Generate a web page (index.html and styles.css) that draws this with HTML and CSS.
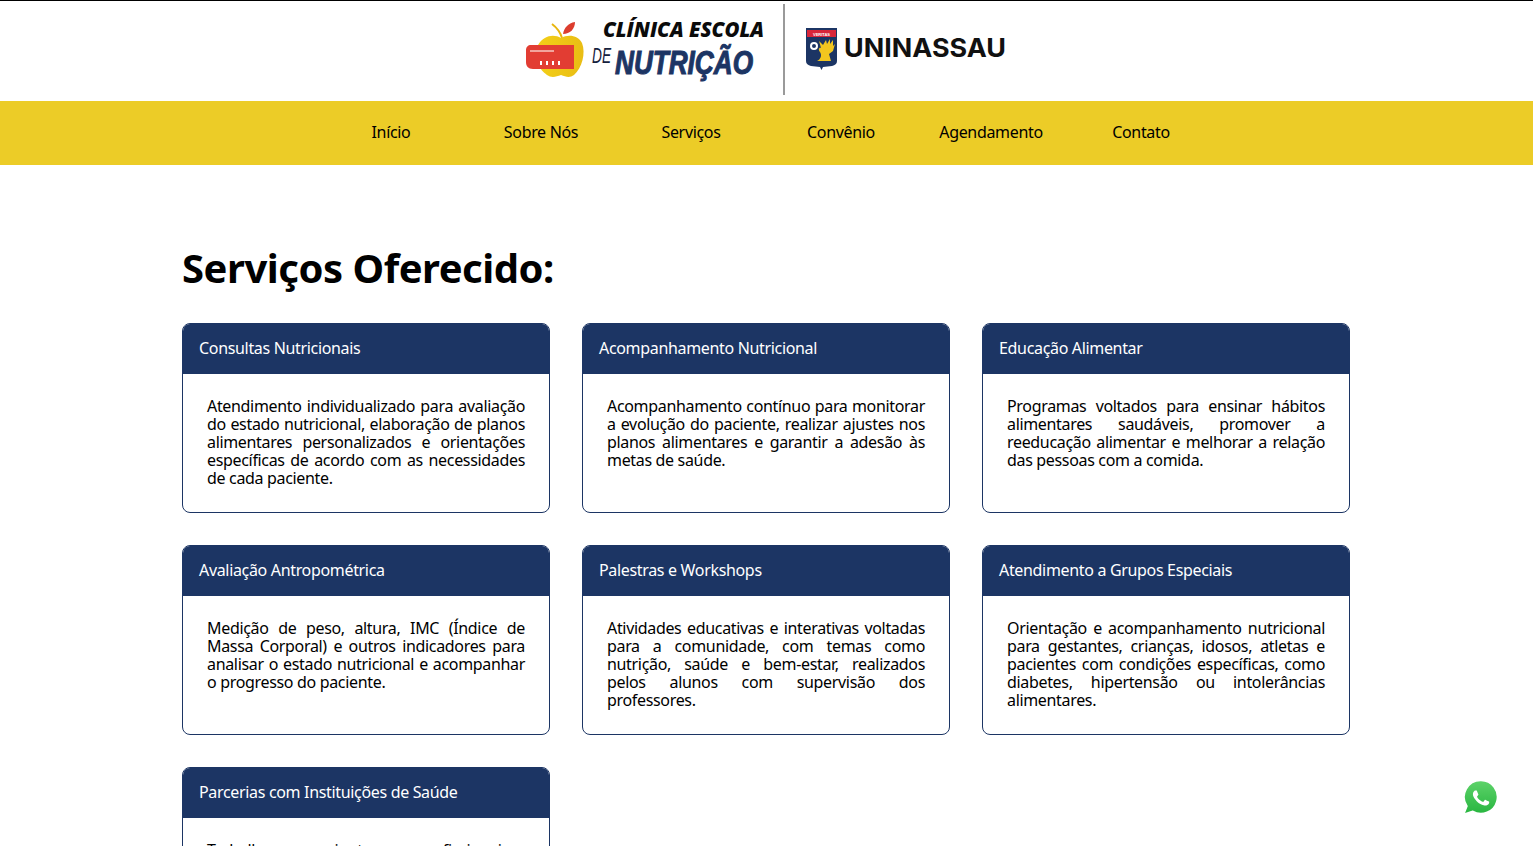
FILE: index.html
```html
<!DOCTYPE html>
<html lang="pt-BR">
<head>
  <meta charset="UTF-8">
  <title>Clínica Escola de Nutrição</title>
  <link rel="stylesheet" href="styles.css">
</head>
<body>
  <header class="topo">
    <svg class="logos" width="500" height="100" viewBox="0 0 500 100" role="img" aria-label="Clínica Escola de Nutrição e Uninassau">
      <defs>
        <linearGradient id="brilho" x1="0" y1="0" x2="1" y2="0">
          <stop offset="0" stop-color="#f3cf18"/>
          <stop offset="1" stop-color="#e9bd14"/>
        </linearGradient>
      </defs>
      <!-- maca -->
      <path d="M38 23 C42 26 46 30 48 37" fill="none" stroke="#e8b60f" stroke-width="2"/>
      <path d="M49 33 C50 27 54 22 61 21 C61 28 56 33 49 33Z" fill="#dc3d2e"/>
      <path d="M47 37 C54 33 64 34 68 42 C72 52 68 67 60 74 C56 77 52 76 47 74 C42 76 37 77 33 74 C29 71 26 68 24 62 L24 44 C30 34 40 33 47 37Z" fill="url(#brilho)"/>
      <path d="M17 44 L60 44 L60 68 L19 68 C14 68 12 65 12 61 L12 49 C12 46 14 44 17 44Z" fill="#e23d33"/>
      <path d="M16 49 L40 49 L40 51 L16 51Z" fill="#f2a49c"/>
      <g fill="#fff">
        <rect x="26" y="60" width="2" height="4"/>
        <rect x="32" y="60" width="2" height="4"/>
        <rect x="38" y="60" width="2" height="4"/>
        <rect x="44" y="60" width="2" height="4"/>
      </g>
      <!-- textos da clinica -->
      <text class="logo-clinica" x="89" y="36" textLength="161" lengthAdjust="spacingAndGlyphs">CLÍNICA ESCOLA</text>
      <text class="logo-de" x="78" y="62" textLength="19" lengthAdjust="spacingAndGlyphs">DE</text>
      <text class="logo-nutricao" x="101" y="73" textLength="138" lengthAdjust="spacingAndGlyphs">NUTRIÇÃO</text>
      <rect x="269" y="3" width="2" height="91" fill="#9a9a9a"/>
      <!-- brasao -->
      <path d="M292 27 L323 27 L323 60 C323 63 321 64 318 65 L309 66 L307.500 69 L306 66 L297 65 C294 64 292 63 292 60Z" fill="#1c3564"/>
      <rect x="293" y="29" width="29" height="7" fill="#d9263a"/>
      <text class="logo-veritas" x="307.500" y="34.500" text-anchor="middle">VERITAS</text>
      <path d="M305 40 L309 44 L312 39 L313 43 L316 38 L316 43 L319 39 L319 45 L321 43 L319 50 L315 53 L317 60 L303 60 C307 58 308 54 306 51 C304 49 305 46 307 47Z" fill="#f2c61f"/>
      <circle cx="300" cy="45" r="3" fill="none" stroke="#fff" stroke-width="2"/>
      <text class="logo-uninassau" x="330" y="56" textLength="162" lengthAdjust="spacingAndGlyphs">UNINASSAU</text>
    </svg>
  </header>

  <nav class="menu">
    <a href="#">Início</a>
    <a href="#">Sobre Nós</a>
    <a href="#">Serviços</a>
    <a href="#">Convênio</a>
    <a href="#">Agendamento</a>
    <a href="#">Contato</a>
  </nav>

  <main class="servicos">
    <h1>Serviços Oferecido:</h1>
    <div class="grade">
      <section class="card">
        <h2>Consultas Nutricionais</h2>
        <p>Atendimento individualizado para avaliação do estado nutricional, elaboração de planos alimentares personalizados e orientações específicas de acordo com as necessidades de cada paciente.</p>
      </section>
      <section class="card">
        <h2>Acompanhamento Nutricional</h2>
        <p>Acompanhamento contínuo para monitorar a evolução do paciente, realizar ajustes nos planos alimentares e garantir a adesão às metas de saúde.</p>
      </section>
      <section class="card">
        <h2>Educação Alimentar</h2>
        <p>Programas voltados para ensinar hábitos alimentares saudáveis, promover a reeducação alimentar e melhorar a relação das pessoas com a comida.</p>
      </section>
      <section class="card">
        <h2>Avaliação Antropométrica</h2>
        <p>Medição de peso, altura, IMC (Índice de Massa Corporal) e outros indicadores para analisar o estado nutricional e acompanhar o progresso do paciente.</p>
      </section>
      <section class="card">
        <h2>Palestras e Workshops</h2>
        <p>Atividades educativas e interativas voltadas para a comunidade, com temas como nutrição, saúde e bem-estar, realizados pelos alunos com supervisão dos professores.</p>
      </section>
      <section class="card">
        <h2>Atendimento a Grupos Especiais</h2>
        <p>Orientação e acompanhamento nutricional para gestantes, crianças, idosos, atletas e pacientes com condições específicas, como diabetes, hipertensão ou intolerâncias alimentares.</p>
      </section>
      <section class="card">
        <h2>Parcerias com Instituições de Saúde</h2>
        <p>Trabalho em conjunto com profissionais e instituições de saúde para oferecer um atendimento mais completo e integrado aos pacientes.</p>
      </section>
    </div>
  </main>

  <a class="whatsapp" href="#" aria-label="WhatsApp">
    <svg width="40" height="40" viewBox="0 0 40 40">
      <defs>
        <linearGradient id="verde" x1="0" y1="0" x2="0" y2="1">
          <stop offset="0" stop-color="#5ed36a"/>
          <stop offset="1" stop-color="#27b53f"/>
        </linearGradient>
      </defs>
      <path d="M20 2.500 A16.500 16.500 0 1 1 11.500 33.200 L2.800 36.200 L6 28.200 A16.500 16.500 0 0 1 20 2.500Z" fill="url(#verde)" stroke="#fff" stroke-width="1.500"/>
      <path transform="translate(3.800 3.800) scale(1.350)" fill="#fff" d="M17.472 14.382c-.297-.149-1.758-.867-2.03-.967-.273-.099-.471-.148-.67.15-.197.297-.767.966-.94 1.164-.173.199-.347.223-.644.075-.297-.15-1.255-.463-2.39-1.475-.883-.788-1.48-1.761-1.653-2.059-.173-.297-.018-.458.13-.606.134-.133.298-.347.446-.52.149-.174.198-.298.298-.497.099-.198.05-.371-.025-.52-.075-.149-.669-1.612-.916-2.207-.242-.579-.487-.5-.669-.51-.173-.008-.371-.01-.57-.01-.198 0-.52.074-.792.372-.272.297-1.04 1.016-1.04 2.479 0 1.462 1.065 2.875 1.213 3.074.149.198 2.096 3.2 5.077 4.487.709.306 1.262.489 1.694.625.712.227 1.36.195 1.871.118.571-.085 1.758-.719 2.006-1.413.248-.694.248-1.289.173-1.413-.074-.124-.272-.198-.57-.347z"/>
    </svg>
  </a>
</body>
</html>
```

FILE: styles.css
```css
* {
  box-sizing: border-box;
}

html, body {
  height: 846px;
  overflow: hidden;
}

body {
  margin: 0;
  font-family: 'Noto Sans', sans-serif;
  color: #000;
  background: #fff;
}

.topo {
  height: 101px;
  border-top: 1px solid #000;
  display: flex;
  justify-content: center;
}

.logos {
  display: block;
  margin-right: 5px;
}

.logo-clinica {
  font: italic 800 21px 'Open Sans', sans-serif;
  fill: #0b0b0b;
}

.logo-de {
  font: italic 400 22px 'Liberation Sans', sans-serif;
  fill: #14213d;
}

.logo-nutricao {
  font: italic 700 33px 'Liberation Sans', sans-serif;
  fill: #1c3564;
  stroke: #1c3564;
  stroke-width: 1.1px;
}

.logo-veritas {
  font: 700 4px 'Liberation Sans', sans-serif;
  fill: #fff;
}

.logo-uninassau {
  font: 700 26px 'Inter', sans-serif;
  fill: #111;
}

.menu {
  height: 64px;
  padding: 0 1px 2px 0;
  background: #eccc27;
  display: flex;
  justify-content: center;
  align-items: center;
}

.menu a {
  width: 150px;
  text-align: center;
  font-size: 16px;
  letter-spacing: -0.33px;
  color: #000;
  text-decoration: none;
}

.servicos {
  width: 1168px;
  margin: 0 auto;
  padding-top: 76px;
  position: relative;
  left: -0.5px;
}

h1 {
  margin: 0 0 29px;
  font-size: 40px;
  line-height: 53px;
  font-weight: 700;
  letter-spacing: -0.47px;
}

.grade {
  display: grid;
  grid-template-columns: repeat(3, 368px);
  grid-auto-rows: 190px;
  gap: 32px;
}

.card {
  border: 1px solid #1c3564;
  border-radius: 8px;
  overflow: hidden;
}

.card h2 {
  margin: 0;
  height: 50px;
  padding: 0 16px;
  background: #1c3564;
  color: #fff;
  font-size: 16px;
  font-weight: 400;
  line-height: 49px;
  letter-spacing: -0.33px;
}

.card p {
  margin: 0;
  padding: 23px 24px 0;
  font-size: 16px;
  line-height: 18px;
  letter-spacing: -0.33px;
  text-align: justify;
}

.whatsapp {
  position: fixed;
  left: 1461px;
  top: 778px;
  display: block;
  width: 40px;
  height: 40px;
}
```
